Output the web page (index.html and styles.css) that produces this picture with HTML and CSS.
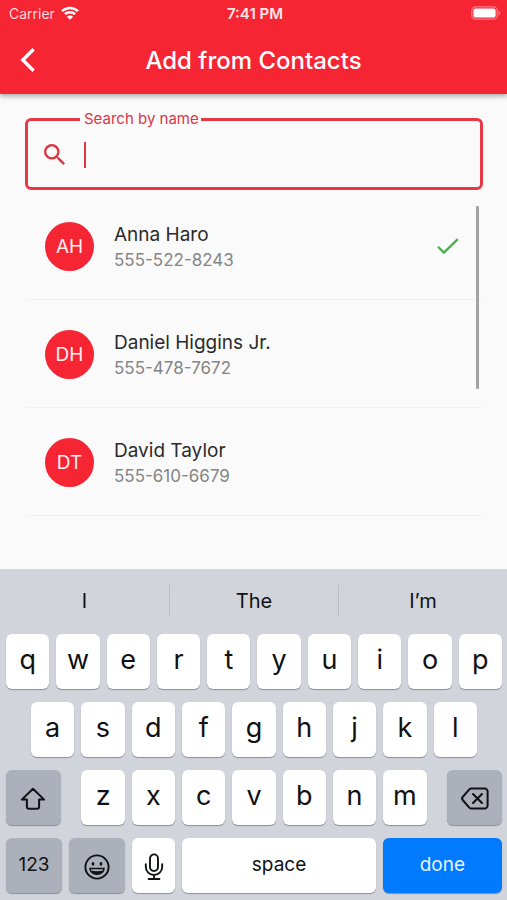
FILE: index.html
```html
<!DOCTYPE html>
<html lang="en">
<head>
<meta charset="utf-8">
<meta name="viewport" content="width=device-width, initial-scale=1">
<title>Add from Contacts</title>
<link rel="stylesheet" href="styles.css">
</head>
<body>
<div class="app">
  <header class="header">
    <div class="status">
      <div class="carrier">
        <span>Carrier</span>
        <svg class="wifi" viewBox="0 0 18 14" aria-hidden="true">
          <path d="M1 5.2a11.6 11.6 0 0 1 16 0M3.9 8.2a7.4 7.4 0 0 1 10.2 0" fill="none" stroke="currentColor" stroke-width="2.5"/>
          <path d="M9 13.8l-3.1-3.1a4.4 4.4 0 0 1 6.2 0z" fill="currentColor"/>
        </svg>
      </div>
      <time class="time">7:41 PM</time>
      <svg class="battery" viewBox="0 0 30 14" aria-hidden="true">
        <rect x=".8" y=".8" width="25.4" height="12.4" rx="3.8" fill="none" stroke="currentColor" stroke-opacity=".4" stroke-width="1.2"/>
        <rect x="2.4" y="2.4" width="22.2" height="9.2" rx="2.2" fill="currentColor"/>
        <path d="M27.6 4.8c2.2.9 2.2 3.5 0 4.4z" fill="currentColor" fill-opacity=".5"/>
      </svg>
    </div>
    <div class="toolbar">
      <button class="back" type="button" aria-label="Back">
        <svg viewBox="0 0 16 24" aria-hidden="true"><path d="M13.6 1.2L2.8 12l10.8 10.8" fill="none" stroke="currentColor" stroke-width="3.4"/></svg>
      </button>
      <h1 class="title">Add from Contacts</h1>
    </div>
  </header>

  <main class="main">
    <fieldset class="search">
      <legend class="search-legend"><label for="search">Search by name</label></legend>
      <div class="search-row">
        <svg class="search-icon" viewBox="3 3 17.5 17.5" aria-hidden="true"><path fill="currentColor" d="M15.5 14h-.79l-.28-.27A6.47 6.47 0 0 0 16 9.5 6.5 6.5 0 1 0 9.5 16c1.61 0 3.09-.59 4.23-1.57l.27.28v.79l5 4.99L20.49 19l-4.99-5zm-6 0C7.01 14 5 11.99 5 9.5S7.01 5 9.5 5 14 7.01 14 9.5 11.99 14 9.5 14z"/></svg>
        <span class="caret"></span>
        <input class="search-input" id="search" type="text" autocomplete="off">
      </div>
    </fieldset>

    <div class="contacts">
      <ul class="list">
        <li class="contact">
          <span class="avatar">AH</span>
          <div class="info"><div class="name">Anna Haro</div><div class="phone">555-522-8243</div></div>
          <svg class="check" viewBox="0 0 22 17" role="img" aria-label="Selected"><path d="M1 8.7l5.9 5.9L20.8 1.2" fill="none" stroke="currentColor" stroke-width="2.3"/></svg>
        </li>
        <li class="contact">
          <span class="avatar">DH</span>
          <div class="info"><div class="name">Daniel Higgins Jr.</div><div class="phone">555-478-7672</div></div>
        </li>
        <li class="contact">
          <span class="avatar">DT</span>
          <div class="info"><div class="name">David Taylor</div><div class="phone">555-610-6679</div></div>
        </li>
      </ul>
      <div class="scrollbar"></div>
    </div>
  </main>

  <section class="keyboard" aria-label="Keyboard">
    <div class="suggestions">
      <button class="suggestion" type="button">I</button>
      <button class="suggestion" type="button">The</button>
      <button class="suggestion" type="button">I’m</button>
    </div>
    <div class="keys">
      <div class="row">
        <button class="key" type="button">q</button><button class="key" type="button">w</button><button class="key" type="button">e</button><button class="key" type="button">r</button><button class="key" type="button">t</button><button class="key" type="button">y</button><button class="key" type="button">u</button><button class="key" type="button">i</button><button class="key" type="button">o</button><button class="key" type="button">p</button>
      </div>
      <div class="row row-middle">
        <button class="key" type="button">a</button><button class="key" type="button">s</button><button class="key" type="button">d</button><button class="key" type="button">f</button><button class="key" type="button">g</button><button class="key" type="button">h</button><button class="key" type="button">j</button><button class="key" type="button">k</button><button class="key" type="button">l</button>
      </div>
      <div class="row row-shift">
        <button class="key key-dark key-side" type="button" aria-label="Shift">
          <svg class="icon-shift" viewBox="0 0 26 24" aria-hidden="true"><path d="M13 1.8L1.8 12.6h5.1v7.2a2 2 0 0 0 2 2h8.2a2 2 0 0 0 2-2v-7.2h5.1z" fill="none" stroke="currentColor" stroke-width="2" stroke-linejoin="round"/></svg>
        </button>
        <div class="row letters">
          <button class="key" type="button">z</button><button class="key" type="button">x</button><button class="key" type="button">c</button><button class="key" type="button">v</button><button class="key" type="button">b</button><button class="key" type="button">n</button><button class="key" type="button">m</button>
        </div>
        <button class="key key-dark key-side" type="button" aria-label="Delete">
          <svg class="icon-delete" viewBox="0 0 28 23" aria-hidden="true"><path d="M10.4 1.5h13.2a3 3 0 0 1 3 3v14a3 3 0 0 1-3 3H10.4a3 3 0 0 1-2.1-.9L1.9 13.3a2.6 2.6 0 0 1 0-3.6l6.4-7.3a3 3 0 0 1 2.1-.9z" fill="none" stroke="currentColor" stroke-width="2"/><path d="M12 7l9 9M21 7l-9 9" fill="none" stroke="currentColor" stroke-width="2.1" stroke-linecap="round"/></svg>
        </button>
      </div>
      <div class="row row-bottom">
        <button class="key key-dark key-word" type="button">123</button>
        <button class="key key-dark" type="button" aria-label="Emoji">
          <svg class="icon-emoji" viewBox="0 0 26 26" aria-hidden="true"><circle cx="13" cy="13" r="11.6" fill="none" stroke="currentColor" stroke-width="1.9"/><ellipse cx="9" cy="9.8" rx="1.4" ry="1.9" fill="currentColor"/><ellipse cx="17" cy="9.8" rx="1.4" ry="1.9" fill="currentColor"/><path d="M5.2 13.8h15.6c0 4.5-3.4 7.2-7.8 7.2s-7.8-2.7-7.8-7.2z" fill="currentColor"/><path d="M7 15.2h12v1.4c-3.6 1-8.4 1-12 0z" fill="#abb0ba"/></svg>
        </button>
        <button class="key" type="button" aria-label="Dictate">
          <svg class="icon-mic" viewBox="0 0 20 28" aria-hidden="true"><rect x="6" y="1.4" width="8" height="16.6" rx="4" fill="none" stroke="currentColor" stroke-width="1.9"/><path d="M1.8 11.2v2.6a8.2 8.2 0 0 0 16.4 0v-2.6M10 22v4M4.6 26h10.8" fill="none" stroke="currentColor" stroke-width="1.9" stroke-linecap="round"/></svg>
        </button>
        <button class="key key-word" type="button">space</button>
        <button class="key key-word key-done" type="button">done</button>
      </div>
    </div>
  </section>
</div>
</body>
</html>
```
FILE: styles.css
```css
* {
  box-sizing: border-box;
}

body {
  margin: 0;
  background: #fafafa;
  color: #2b2b2b;
  font-family: Inter, "Liberation Sans", sans-serif;
}

button,
input {
  margin: 0;
  padding: 0;
  border: 0;
  background: none;
  color: inherit;
  font: inherit;
}

svg {
  display: block;
}

.app {
  display: flex;
  flex-direction: column;
  min-height: 100vh;
}

/* Header */
.header {
  background: #f62534;
  color: #fff;
  box-shadow: 0 2px 5px rgba(0, 0, 0, 0.35);
}

.status {
  display: grid;
  grid-template-columns: 1fr auto 1fr;
  align-items: center;
  height: 26px;
  padding: 0 6px 0 9px;
  font-size: 14px;
}

.carrier {
  display: flex;
  align-items: center;
  gap: 6px;
  color: #ffdadd;
}

.wifi {
  width: 18px;
  height: 14px;
  color: #fff;
}

.time {
  color: #ffe6e8;
  font-size: 15px;
  font-weight: 600;
}

.battery {
  justify-self: end;
  width: 30px;
  height: 14px;
}

.toolbar {
  display: grid;
  grid-template-columns: 56px 1fr 56px;
  align-items: center;
  height: 68px;
}

.back {
  display: flex;
  align-items: center;
  justify-content: center;
  height: 48px;
}

.back svg {
  width: 16px;
  height: 24px;
}

.title {
  margin: 0;
  font-size: 24px;
  font-weight: 500;
  text-align: center;
}

/* Search */
.main {
  flex: 1;
  padding: 18px 24px 0 25px;
}

.search {
  min-width: 0;
  margin: 0;
  padding: 0 16px;
  border: 3px solid #e63946;
  border-radius: 6px;
  color: #dc3545;
}

.search-legend {
  margin-left: 36px;
  padding: 0 2px 0 4px;
  font-size: 15px;
  line-height: 14px;
}

.search-row {
  display: flex;
  align-items: center;
  height: 61px;
  padding-bottom: 4px;
}

.search-icon {
  width: 21px;
  height: 21px;
}

.caret {
  width: 2px;
  height: 26px;
  margin-left: 19px;
  background: #dc3545;
}

.search-input {
  flex: 1;
  min-width: 0;
  height: 40px;
  font-size: 20px;
  outline: none;
}

/* Contacts */
.contacts {
  position: relative;
  margin-left: 2px;
  padding-top: 2px;
}

.list {
  margin: 0;
  padding: 0;
  list-style: none;
}

.contact {
  display: flex;
  align-items: center;
  gap: 20px;
  height: 108px;
  padding: 2px 24px 0 18px;
  border-bottom: 1px solid #f0f0f0;
}

.avatar {
  display: flex;
  flex: none;
  align-items: center;
  justify-content: center;
  width: 49px;
  height: 49px;
  border-radius: 50%;
  background: #f62534;
  color: #ffeff0;
  font-size: 19px;
}

.info {
  flex: 1;
}

.name {
  font-size: 19px;
  line-height: 26px;
}

.phone {
  color: #858585;
  font-size: 17px;
  line-height: 24px;
}

.check {
  width: 22px;
  height: 17px;
  color: #4caf50;
}

.scrollbar {
  position: absolute;
  top: 16px;
  right: 4px;
  width: 3px;
  height: 183px;
  border-radius: 1px;
  background: #a3a3a3;
}

/* Keyboard */
.keyboard {
  background: #d1d4db;
  color: #101114;
}

.suggestions {
  display: grid;
  grid-template-columns: repeat(3, 1fr);
  padding: 16px 0 18px;
}

.suggestion {
  height: 31px;
  font-size: 20px;
}

.suggestion + .suggestion {
  border-left: 1px solid #babdc4;
}

.keys {
  display: flex;
  flex-direction: column;
  gap: 13px;
  padding: 0 5px 7px 6px;
}

.row {
  display: flex;
  gap: 7px;
}

.row-middle {
  padding: 0 25px;
}

.row-shift {
  justify-content: space-between;
}

.letters {
  flex: none;
  width: calc((100% - 63px) * 0.7 + 42px);
}

.row-bottom {
  display: grid;
  grid-template-columns: 56fr 56fr 43fr 193fr 119fr;
}

.key {
  display: flex;
  flex: 1;
  align-items: center;
  justify-content: center;
  min-width: 0;
  height: 55px;
  padding-bottom: 4px;
  border-radius: 6px;
  background: #fff;
  box-shadow: 0 1px 1px #8b8e94;
  font-size: 27px;
}

.key svg {
  margin-top: 6px;
}

.key-side {
  flex: 0 0 11%;
}

.key-dark {
  background: #abb0ba;
}

.key-word {
  padding-bottom: 2px;
  font-size: 19px;
}

.key-done {
  background: #007aff;
  color: #e8f3ff;
}

.icon-shift {
  width: 26px;
  height: 24px;
}

.icon-delete {
  width: 28px;
  height: 23px;
}

.icon-emoji {
  width: 26px;
  height: 26px;
}

.icon-mic {
  width: 20px;
  height: 28px;
}
```
